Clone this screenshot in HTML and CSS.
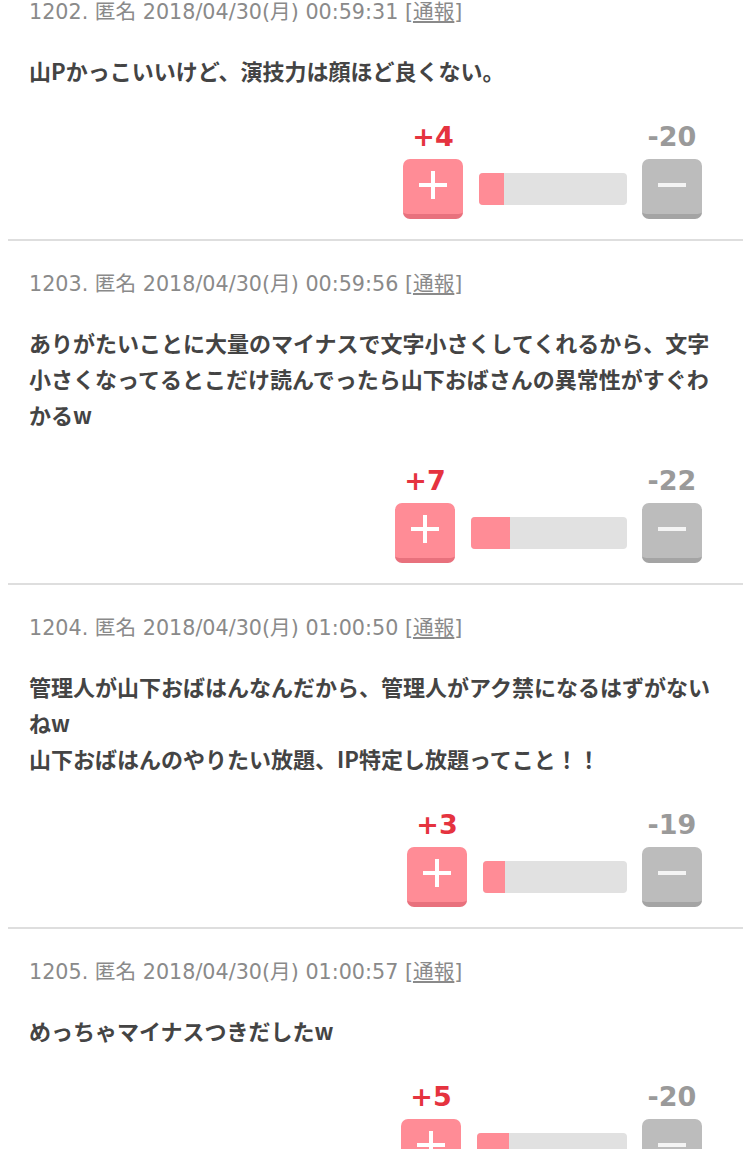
FILE: index.html
```html
<!DOCTYPE html>
<html lang="ja">
<head>
<meta charset="utf-8">
<title>コメント</title>
<link rel="stylesheet" href="styles.css">
</head>
<body>
<div class="thread">
  <article class="post">
    <div class="meta">1202. 匿名 2018/04/30(月) 00:59:31 [<a href="#" class="report">通報</a>]</div>
    <div class="body">山Pかっこいいけど、演技力は顔ほど良くない。</div>
    <div class="vote">
      <div class="vote-col">
        <span class="count plus-count">+4</span>
        <button class="btn btn-plus" aria-label="プラス"><svg width="30" height="30" viewBox="0 0 30 30"><path d="M15 1v28M1 15h28" stroke="#fff" stroke-width="4"/></svg></button>
      </div>
      <div class="bar"><div class="fill" style="width:17%"></div></div>
      <div class="vote-col">
        <span class="count minus-count">-20</span>
        <button class="btn btn-minus" aria-label="マイナス"><svg width="30" height="30" viewBox="0 0 30 30"><path d="M1 15h28" stroke="#f4f4f4" stroke-width="4"/></svg></button>
      </div>
    </div>
  </article>

  <article class="post">
    <div class="meta">1203. 匿名 2018/04/30(月) 00:59:56 [<a href="#" class="report">通報</a>]</div>
    <div class="body">ありがたいことに大量のマイナスで文字小さくしてくれるから、文字小さくなってるとこだけ読んでったら山下おばさんの異常性がすぐわかるw</div>
    <div class="vote">
      <div class="vote-col">
        <span class="count plus-count">+7</span>
        <button class="btn btn-plus" aria-label="プラス"><svg width="30" height="30" viewBox="0 0 30 30"><path d="M15 1v28M1 15h28" stroke="#fff" stroke-width="4"/></svg></button>
      </div>
      <div class="bar bar-wide"><div class="fill" style="width:25%"></div></div>
      <div class="vote-col">
        <span class="count minus-count">-22</span>
        <button class="btn btn-minus" aria-label="マイナス"><svg width="30" height="30" viewBox="0 0 30 30"><path d="M1 15h28" stroke="#f4f4f4" stroke-width="4"/></svg></button>
      </div>
    </div>
  </article>

  <article class="post">
    <div class="meta">1204. 匿名 2018/04/30(月) 01:00:50 [<a href="#" class="report">通報</a>]</div>
    <div class="body">管理人が山下おばはんなんだから、管理人がアク禁になるはずがないねw<br>山下おばはんのやりたい放題、IP特定し放題ってこと！！</div>
    <div class="vote">
      <div class="vote-col">
        <span class="count plus-count">+3</span>
        <button class="btn btn-plus" aria-label="プラス"><svg width="30" height="30" viewBox="0 0 30 30"><path d="M15 1v28M1 15h28" stroke="#fff" stroke-width="4"/></svg></button>
      </div>
      <div class="bar bar-narrow"><div class="fill" style="width:15%"></div></div>
      <div class="vote-col">
        <span class="count minus-count">-19</span>
        <button class="btn btn-minus" aria-label="マイナス"><svg width="30" height="30" viewBox="0 0 30 30"><path d="M1 15h28" stroke="#f4f4f4" stroke-width="4"/></svg></button>
      </div>
    </div>
  </article>

  <article class="post">
    <div class="meta">1205. 匿名 2018/04/30(月) 01:00:57 [<a href="#" class="report">通報</a>]</div>
    <div class="body">めっちゃマイナスつきだしたw</div>
    <div class="vote">
      <div class="vote-col">
        <span class="count plus-count">+5</span>
        <button class="btn btn-plus" aria-label="プラス"><svg width="30" height="30" viewBox="0 0 30 30"><path d="M15 1v28M1 15h28" stroke="#fff" stroke-width="4"/></svg></button>
      </div>
      <div class="bar bar-mid"><div class="fill" style="width:21%"></div></div>
      <div class="vote-col">
        <span class="count minus-count">-20</span>
        <button class="btn btn-minus" aria-label="マイナス"><svg width="30" height="30" viewBox="0 0 30 30"><path d="M1 15h28" stroke="#f4f4f4" stroke-width="4"/></svg></button>
      </div>
    </div>
  </article>
</div>
</body>
</html>
```

FILE: styles.css
```css
html, body {
  margin: 0;
  padding: 0;
  background: #fff;
}

body {
  margin: 0 4px 0 8px;
  font-family: "Noto Sans CJK JP", "Noto Sans", sans-serif;
  color: #444;
}

/* the page is scrolled: the first comment starts above the viewport */
.thread {
  margin-top: -31px;
}

.post {
  padding: 29px 21px 20px 21px;
  border-bottom: 2px solid #dedede;
}

.meta {
  font-family: "DejaVu Sans", "Noto Sans CJK JP", sans-serif;
  font-size: 20.7px;
  line-height: 28px;
  color: #8a8a8a;
  white-space: nowrap;
}

.report {
  color: #8a8a8a;
  text-decoration: underline;
  text-underline-offset: 2px;
}

.body {
  margin-top: 26px;
  font-size: 22px;
  line-height: 36px;
  font-weight: 700;
  color: #444;
}

.vote {
  margin-top: 33px;
  display: flex;
  justify-content: flex-end;
  align-items: flex-end;
  padding-right: 20px;
}

.vote-col {
  display: flex;
  flex-direction: column;
  align-items: center;
  gap: 6px;
  width: 60px;
}

.count {
  font-family: "DejaVu Sans", "Verdana", sans-serif;
  font-weight: 700;
  font-size: 27px;
  line-height: 32px;
  white-space: nowrap;
}

.plus-count {
  color: #e5333f;
}

.minus-count {
  color: #9a9a9a;
}

.btn {
  display: flex;
  align-items: center;
  justify-content: center;
  width: 60px;
  height: 60px;
  padding: 0;
  border: 0;
  border-radius: 7px;
  box-sizing: border-box;
  cursor: pointer;
}

.btn svg {
  display: block;
  margin-top: -3px;
}

.btn-plus {
  background: #ff8c96;
  border-bottom: 5px solid #e8717d;
}

.btn-minus {
  background: #bcbcbc;
  border-bottom: 5px solid #a4a4a4;
}

.bar {
  width: 148px;
  height: 32px;
  margin: 0 15px 14px 16px;
  background: #e1e1e1;
  border-radius: 4px;
  overflow: hidden;
}

.bar-wide {
  width: 156px;
}

.bar-narrow {
  width: 144px;
}

.bar-mid {
  width: 150px;
}

.fill {
  height: 100%;
  background: #ff8c96;
}
```
